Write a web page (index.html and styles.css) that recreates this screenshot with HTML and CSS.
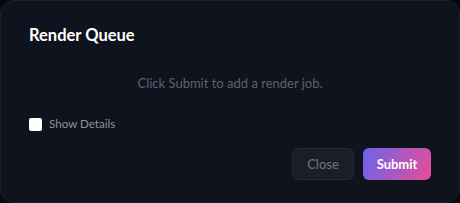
FILE: index.html
```html
<!DOCTYPE html>
<html lang="en">
<head>
    <meta charset="UTF-8">
    <title>Render Queue</title>
    <link rel="stylesheet" href="styles.css">
</head>
<body>
<div class="dialog">
    <h2 class="dialog-title">Render Queue</h2>
    <p class="empty">Click Submit to add a render job.</p>
    <label class="check">
        <span class="box"></span>
        <span class="check-label">Show Details</span>
    </label>
    <div class="actions">
        <button class="btn btn-close">Close</button>
        <button class="btn btn-submit">Submit</button>
    </div>
</div>
</body>
</html>
```

FILE: styles.css
```css
*{
    margin: 0;
    padding: 0;
    box-sizing: border-box;
}
html, body{
    width: 460px;
    height: 203px;
    background-color: #07090e;
    font-family: Lato, "Noto Sans", sans-serif;
}
.dialog{
    width: 460px;
    height: 203px;
    background-color: #0e131d;
    border: 1px solid #1c212b;
    border-radius: 14px;
    padding: 24px 28px 22px 28px;
    display: flex;
    flex-direction: column;
}
.dialog-title{
    font-size: 16.5px;
    font-weight: 700;
    color: #ffffff;
    line-height: 20px;
}
.empty{
    margin-top: 30px;
    text-align: center;
    font-size: 13px;
    color: #5c6370;
    line-height: 16px;
}
.check{
    margin-top: 26px;
    display: flex;
    align-items: center;
    gap: 7px;
}
.check .box{
    width: 13px;
    height: 13px;
    background-color: #ffffff;
    border-radius: 2px;
}
.check-label{
    font-size: 11.6px;
    color: #8d939e;
    line-height: 14px;
}
.actions{
    margin-top: auto;
    display: flex;
    justify-content: flex-end;
    gap: 9px;
}
.btn{
    height: 32px;
    border-radius: 6px;
    font-family: Lato, "Noto Sans", sans-serif;
    font-size: 13px;
}
.btn-close{
    width: 62px;
    background-color: #1a1e28;
    border: 1px solid #252a34;
    color: #6b717d;
    font-weight: 500;
}
.btn-submit{
    width: 68px;
    border: none;
    color: #ffffff;
    font-weight: 700;
    background: linear-gradient(110deg, #6c63ea, #e64e98);
}
```
